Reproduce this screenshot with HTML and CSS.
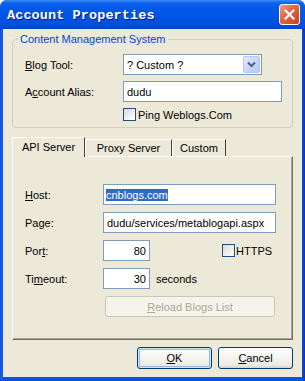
FILE: index.html
```html
<!DOCTYPE html>
<html lang="en">
<head>
  <meta charset="UTF-8" />
  <title>Account Properties</title>
  <link rel="stylesheet" href="styles.css">
</head>
<body>
  <div class="window">
    <div class="titlebar">
      <span class="title">Account Properties</span>
      <span class="close">
        <svg width="11" height="11" viewBox="0 0 11 11"><path d="M1.5 1.5 L9.5 9.5 M9.5 1.5 L1.5 9.5" stroke="#fff" stroke-width="2.2" stroke-linecap="square"/></svg>
      </span>
    </div>

    <div class="client">
      <fieldset class="group">
        <legend>Content Management System</legend>
        <div class="row">
          <span class="lbl"><u>B</u>log Tool:</span>
          <div class="select">
            <span>? Custom ?</span>
            <span class="drop">
              <svg width="9" height="7" viewBox="0 0 9 7"><path d="M1 1.5 L4.5 5 L8 1.5" fill="none" stroke="#4D6185" stroke-width="2"/></svg>
            </span>
          </div>
        </div>
        <div class="row">
          <span class="lbl">A<u>c</u>count Alias:</span>
          <div class="input alias">dudu</div>
        </div>
        <div class="row check-row">
          <span class="box"></span>Ping Weblogs.Com
        </div>
      </fieldset>

      <div class="tabs">
        <div class="tab active">API Server</div>
        <div class="tab">Proxy Server</div>
        <div class="tab">Custom</div>
      </div>

      <div class="panel">
        <div class="prow">
          <span class="plbl"><u>H</u>ost:</span>
          <div class="input long"><span class="sel">cnblogs.com</span></div>
        </div>
        <div class="prow">
          <span class="plbl">Pa<u>g</u>e:</span>
          <div class="input long">dudu/services/metablogapi.aspx</div>
        </div>
        <div class="prow">
          <span class="plbl">Por<u>t</u>:</span>
          <div class="input num">80</div>
          <span class="https"><span class="box"></span>HTTPS</span>
        </div>
        <div class="prow">
          <span class="plbl">Ti<u>m</u>eout:</span>
          <div class="input num">30</div>
          <span class="unit">seconds</span>
        </div>
        <div class="prow">
          <span class="plbl"></span>
          <div class="btn disabled"><u>R</u>eload Blogs List</div>
        </div>
      </div>

      <div class="buttons">
        <div class="btn default"><u>O</u>K</div>
        <div class="btn"><u>C</u>ancel</div>
      </div>
    </div>
  </div>
</body>
</html>
```

FILE: styles.css
```css
* {
  box-sizing: border-box;
  margin: 0;
  padding: 0;
}

body {
  width: 305px;
  height: 381px;
  overflow: hidden;
  font-family: 'Liberation Sans', Arial, sans-serif;
  font-size: 11px;
  color: #000;
  background: #fff;
}

.window {
  width: 305px;
  height: 381px;
  display: flex;
  flex-direction: column;
  background: linear-gradient(90deg, #0842D0 0, #1C63EE 1px, #0A52E2 3px, #0A52E2 302px, #0838C9 304px);
  border-radius: 7px 7px 0 0;
}

.titlebar {
  height: 29px;
  display: flex;
  align-items: center;
  justify-content: space-between;
  padding: 1px 5px 0 7px;
  border-radius: 7px 7px 0 0;
  background: linear-gradient(#3D8DFB 0, #0E62EC 3px, #0258E8 8px, #0055E4 16px, #0150DC 24px, #0043CF 29px);
}

.title {
  font-family: 'Liberation Mono', monospace;
  font-weight: bold;
  font-size: 13.5px;
  color: #fff;
  text-shadow: 1px 1px 0 #0A1A8A;
  letter-spacing: 0.1px;
}

.close {
  width: 21px;
  height: 21px;
  display: flex;
  align-items: center;
  justify-content: center;
  border: 1px solid #fff;
  border-radius: 3px;
  background: linear-gradient(135deg, #F09B7E 0, #E2643F 45%, #C8401A 100%);
  margin-top: -1px;
}

.client {
  flex: 1;
  margin: 0 3px 4px;
  background: #ECE9D8;
  padding: 4px 9px 0;
  display: flex;
  flex-direction: column;
}

/* group box */
.group {
  border: 1px solid #D0D0BF;
  border-radius: 4px;
  padding: 8px 10px 6px 12px;
  display: flex;
  flex-direction: column;
  gap: 6px;
}

.group legend {
  color: #0046D5;
  padding: 0 2px;
  margin-left: -7px;
  line-height: 13px;
}

.row {
  display: flex;
  align-items: center;
}

.lbl {
  width: 98px;
}

.select {
  width: 139px;
  height: 21px;
  background: #fff;
  border: 1px solid #7F9DB9;
  display: flex;
  align-items: center;
  justify-content: space-between;
  padding: 0 1px 0 3px;
}

.drop {
  width: 17px;
  height: 17px;
  display: flex;
  align-items: center;
  justify-content: center;
  border: 1px solid #B5C8F2;
  border-radius: 2px;
  background: linear-gradient(135deg, #E3ECFE 0, #C4D4F8 60%, #B6C9F5 100%);
}

.input {
  height: 21px;
  background: #fff;
  border: 1px solid #7F9DB9;
  display: flex;
  align-items: center;
  padding: 0 3px;
  white-space: nowrap;
  overflow: hidden;
}

.alias {
  width: 159px;
}

.check-row {
  padding-left: 98px;
  height: 13px;
  gap: 2px;
}

.box {
  display: inline-block;
  width: 13px;
  height: 13px;
  border: 1px solid #1C5180;
  background: linear-gradient(135deg, #DCDCD7 0, #F4F4F1 70%, #fff 100%);
}

/* tabs */
.tabs {
  display: flex;
  margin-top: 9px;
  height: 19px;
  align-items: flex-end;
  position: relative;
  z-index: 1;
}

.tab {
  height: 17px;
  display: flex;
  align-items: center;
  justify-content: center;
  border-left: 1px solid #fff;
  border-top: 1px solid #fff;
  border-right: 1px solid #404040;
}

.tab:nth-child(1) { width: 73px; }
.tab:nth-child(2) { width: 87px; }
.tab:nth-child(3) { width: 54px; }

.tab.active {
  height: 20px;
  margin-bottom: -1px;
  background: #ECE9D8;
  padding-bottom: 1px;
}

.panel {
  height: 184px;
  border-top: 1px solid #fff;
  border-left: 1px solid #fff;
  border-right: 1px solid #716F64;
  border-bottom: 1px solid #716F64;
  box-shadow: inset -1px -1px 0 #ACA899;
  padding: 27px 0 0 12px;
  display: flex;
  flex-direction: column;
  gap: 7px;
}

.prow {
  display: flex;
  align-items: center;
}

.plbl {
  width: 78px;
}

.long {
  width: 173px;
}

.sel {
  background: #316AC5;
  color: #fff;
  margin-left: -1px;
}

.num {
  width: 47px;
  justify-content: flex-end;
}

.https {
  display: flex;
  align-items: center;
  gap: 1px;
  margin-left: 72px;
}

.unit {
  margin-left: 6px;
}

/* buttons */
.btn {
  height: 22px;
  width: 75px;
  display: flex;
  align-items: center;
  justify-content: center;
  border: 1px solid #003C74;
  border-radius: 3px;
  background: linear-gradient(#FFFFFF 0, #F4F4F0 50%, #ECEBE6 85%, #D6D0C5 100%);
}

.btn.default {
  box-shadow: inset 0 0 0 1px #CEE7FF, inset 0 0 0 2px #98B8EA;
}

.btn.disabled {
  width: 170px;
  height: 21px;
  margin-left: 2px;
  border-color: #C9C7BA;
  background: #F5F4EA;
  color: #ACA899;
}

.buttons {
  display: flex;
  justify-content: flex-end;
  gap: 6px;
  margin-top: 7px;
}
```
